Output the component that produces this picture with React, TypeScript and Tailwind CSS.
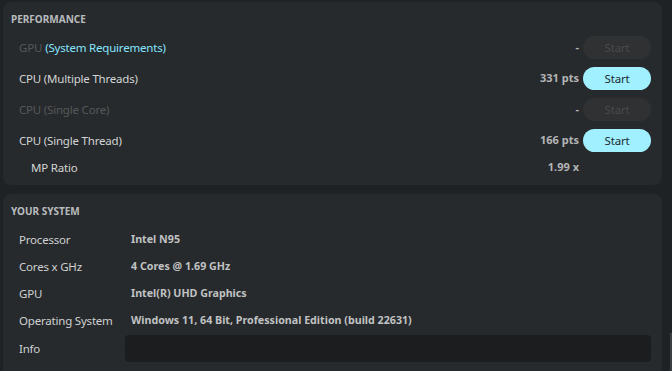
const font = { fontFamily: '"Noto Sans", "Open Sans", sans-serif' };

interface BenchRow {
  label: string;
  extra?: string;
  value: string;
  enabled: boolean;
}

const benches: BenchRow[] = [
  { label: 'GPU', extra: '(System Requirements)', value: '-', enabled: false },
  { label: 'CPU (Multiple Threads)', value: '331 pts', enabled: true },
  { label: 'CPU (Single Core)', value: '-', enabled: false },
  { label: 'CPU (Single Thread)', value: '166 pts', enabled: true },
];

const system = [
  ['Processor', 'Intel N95'],
  ['Cores x GHz', '4 Cores @ 1.69 GHz'],
  ['GPU', 'Intel(R) UHD Graphics'],
  ['Operating System', 'Windows 11, 64 Bit, Professional Edition (build 22631)'],
];

export default function App() {
  return (
    <div className="w-[672px] h-[371px] overflow-hidden bg-[#1f2224] flex" style={font}>
      <div className="w-[662px] pl-[3px] pt-[2px] flex flex-col gap-[9px]">
        {/* Performance */}
        <div className="h-[183px] rounded-lg bg-[#272a2c] pl-[8px] pr-[11px] flex flex-col">
          <div className="mt-[10px] h-[14px] leading-[14px] text-[10px] font-bold text-[#b9bcbe]">PERFORMANCE</div>
          <div className="mt-[6px] flex flex-col">
            {benches.map((b) => (
              <div key={b.label} className="h-[31px] flex items-center pl-[8px] text-[11.5px] tracking-[-0.2px]">
                <span className={b.enabled ? 'text-[#d2d4d5]' : 'text-[#55585a]'}>{b.label}</span>
                {b.extra && <span className="ml-[3px] text-[#86e6ff]">{b.extra}</span>}
                <span className="ml-auto mr-[4px] font-bold text-[11px] tracking-normal text-[#b3b5b7]">{b.value}</span>
                <button
                  className={
                    'w-[68px] h-[23px] rounded-full text-[11.5px] ' +
                    (b.enabled ? 'bg-[#a1f0ff] text-[#1d2b30]' : 'bg-[#2f3132] text-[#494b4c]')
                  }
                >
                  Start
                </button>
              </div>
            ))}
            <div className="h-[23px] flex items-center pl-[20px] text-[11.5px] tracking-[-0.2px]">
              <span className="text-[#d2d4d5]">MP Ratio</span>
              <span className="ml-auto mr-[72px] font-bold text-[11px] tracking-normal text-[#b3b5b7]">1.99 x</span>
            </div>
          </div>
        </div>

        {/* Your system */}
        <div className="flex-1 rounded-t-lg bg-[#272a2c] pl-[8px] pr-[11px] flex flex-col">
          <div className="mt-[10px] h-[14px] leading-[14px] text-[10px] font-bold text-[#b9bcbe]">YOUR SYSTEM</div>
          <div className="mt-[8px] flex flex-col">
            {system.map(([k, v]) => (
              <div key={k} className="h-[27px] flex items-center pl-[8px] text-[11.5px] tracking-[-0.2px]">
                <span className="w-[112px] text-[#cfd1d2]">{k}</span>
                <span className="font-bold text-[10.7px] tracking-normal text-[#c0c2c3]">{v}</span>
              </div>
            ))}
            <div className="h-[29px] flex items-center pl-[8px] text-[11.5px] tracking-[-0.2px]">
              <span className="w-[106px] text-[#cfd1d2]">Info</span>
              <div className="flex-1 h-[27px] rounded-[4px] bg-[#1c1d1e]" />
            </div>
          </div>
        </div>
      </div>
      <div className="flex-1 flex justify-end">
        <div className="w-[2px] mt-[333px] bg-[#3d4042]" />
      </div>
    </div>
  );
}
